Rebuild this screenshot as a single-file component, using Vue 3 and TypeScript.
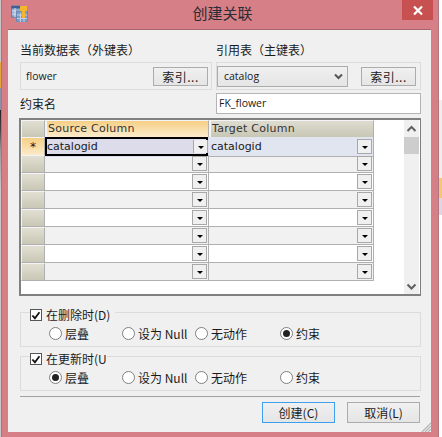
<script setup lang="ts">
const rows = [
  { src: 'catalogid', tgt: 'catalogid' },
  { src: '', tgt: '' },
  { src: '', tgt: '' },
  { src: '', tgt: '' },
  { src: '', tgt: '' },
  { src: '', tgt: '' },
  { src: '', tgt: '' },
  { src: '', tgt: '' },
]
const groups = [
  { label: '在删除时(D)', active: 3, gap: true },
  { label: '在更新时(U', active: 0, gap: false },
]
const options = ['层叠', '设为 Null', '无动作', '约束']
</script>

<template>
  <div class="screen">
    <div class="window">
      <div class="titlebar">
        <svg class="appicon" width="17" height="17" viewBox="0 0 17 17">
          <rect x="0.5" y="1" width="9" height="11" fill="#8fa9cf" stroke="#5f7fae" />
          <rect x="0.5" y="1" width="9" height="2.500" fill="#3f5f96" />
          <path d="M1 6h8M1 9h8M4 3v9" stroke="#d6e0ee" />
          <rect x="5.500" y="6" width="11" height="11" fill="#7f9cc8" stroke="#6c88b4" />
          <path d="M6 10h10M6 13.500h10M9.500 8v9M13 8v9" stroke="#c2d0e6" />
          <path d="M9 1h7v5h-2v7h-3V6H9z" fill="#f3b62c" />
        </svg>
        <div class="title">创建关联</div>
        <div class="close">
          <svg width="12" height="11" viewBox="0 0 12 11">
            <path d="M2 1.500l8 8M10 1.500l-8 8" stroke="#fff" stroke-width="2.200" />
          </svg>
        </div>
      </div>

      <div class="client">
        <div class="top">
          <div class="col">
            <div class="label">当前数据表（外键表）</div>
            <div class="box">
              <span class="value">flower</span>
              <div class="btn small">索引...</div>
            </div>
          </div>
          <div class="col">
            <div class="label">引用表（主键表）</div>
            <div class="box right">
              <div class="select">
                <span>catalog</span>
                <svg width="9" height="7" viewBox="0 0 9 7"><path d="M1 1.500l3.500 3.500 3.500-3.500" fill="none" stroke="#555" stroke-width="2" /></svg>
              </div>
              <div class="btn small">索引...</div>
            </div>
          </div>
        </div>

        <div class="name-row">
          <div class="label">约束名</div>
          <div class="input">FK_flower</div>
        </div>

        <div class="grid">
          <div class="table">
            <div class="tr head">
              <div class="rh"></div>
              <div class="th hot">Source Column</div>
              <div class="th">Target Column</div>
            </div>
            <div v-for="(row, i) in rows" :key="i" class="tr" :class="{ alt: i % 2 === 1, first: i === 0 }">
              <div class="rh" :class="{ hot2: i === 0 }">{{ i === 0 ? '*' : '' }}</div>
              <div class="td" :class="{ current: i === 0 }">
                <span>{{ row.src }}</span>
                <div class="drop"><i></i></div>
              </div>
              <div class="td">
                <span>{{ row.tgt }}</span>
                <div class="drop"><i></i></div>
              </div>
            </div>
          </div>
          <div class="scroll">
            <svg class="up" width="15" height="17" viewBox="0 0 15 17"><path d="M3.500 11l4-4 4 4" fill="none" stroke="#606060" stroke-width="2" /></svg>
            <div class="thumb"></div>
            <div class="track"></div>
            <svg width="15" height="15" viewBox="0 0 15 15"><path d="M3.500 5.500l4 4 4-4" fill="none" stroke="#606060" stroke-width="2" /></svg>
          </div>
        </div>

        <div v-for="(g, gi) in groups" :key="gi" class="group" :class="{ second: gi === 1 }">
          <div class="legend" :class="{ pad: g.gap }">
            <span class="check">
              <svg width="11" height="11" viewBox="0 0 11 11"><path d="M1.500 5.500l2.800 3 5-6.500" fill="none" stroke="#111" stroke-width="2" /></svg>
            </span>
            <span>{{ g.label }}</span>
          </div>
          <div class="radios">
            <div v-for="(o, oi) in options" :key="o" class="radio">
              <span class="dot" :class="{ on: oi === g.active }"></span>
              <span>{{ o }}</span>
            </div>
          </div>
        </div>

        <div class="sep"></div>

        <div class="actions">
          <div class="btn big default">创建(C)</div>
          <div class="btn big">取消(L)</div>
        </div>

        <svg class="grip" width="11" height="11" viewBox="0 0 11 11">
          <path d="M11 2L2 11M11 5L5 11M11 8L8 11" stroke="#b4b4b4" stroke-width="1.200" />
        </svg>
      </div>
    </div>
    <div class="outside"></div>
  </div>
</template>

<style scoped>
.screen {
  width: 442px;
  height: 437px;
  display: flex;
  overflow: hidden;
  background: linear-gradient(180deg, #c8c8c8 0, #c8c8c8 62px, #e2a83a 62px, #e2a83a 88px, #8f8fa8 88px, #8f8fa8 110px, #222 110px, #444 130px, #999 150px, #c9c9c9 190px, #c9c9c9 100%);
  font-family: "Noto Sans CJK SC", "DejaVu Sans", sans-serif;
  font-size: 12px;
  color: #1a1a1a;
}
.window {
  width: 438px;
  margin-left: 1px;
  height: 437px;
  flex: none;
  display: flex;
  flex-direction: column;
  background: #d67f87;
  border-left: 1px solid #a9747a;
  border-right: 1px solid #b0787e;
  box-sizing: border-box;
}
.outside {
  flex: 1;
  background: linear-gradient(180deg, #fff 0, #fff 100px, #eee 100px, #eee 178px, #f0c877 178px, #f0c877 198px, #d8d8e8 198px, #d8d8e8 215px, #fff 215px);
}
.titlebar {
  height: 29px;
  flex: none;
  display: flex;
  align-items: flex-start;
  padding-left: 9px;
}
.appicon {
  margin-top: 5px;
  flex: none;
}
.title {
  flex: 1;
  text-align: center;
  font-size: 15px;
  line-height: 26px;
  color: #2b2b33;
  padding-left: 15px;
}
.close {
  width: 31px;
  height: 20px;
  margin-right: 5px;
  background: #c75050;
  display: flex;
  align-items: center;
  justify-content: center;
  flex: none;
}
.client {
  flex: 1;
  position: relative;
  margin: 0 7px 5px 6px;
  background: #f0f0f0;
  border-top: 1px solid #a9656d;
  padding: 13px 10px 0 12px;
  box-sizing: border-box;
  min-height: 0;
}
.top {
  display: grid;
  grid-template-columns: 192px 205px;
  column-gap: 4px;
}
.label {
  line-height: 14px;
  height: 14px;
  font-size: 12px;
}
.box {
  margin-top: 5px;
  height: 28px;
  box-sizing: border-box;
  border: 1px solid #dcdcdc;
  display: flex;
  align-items: center;
  justify-content: space-between;
  padding: 0 3px 0 5px;
}
.box.right {
  padding-left: 0;
  padding-right: 4px;
}
.value {
  font-family: "Open Sans", sans-serif;
  font-size: 10.500px;
}
.btn {
  box-sizing: border-box;
  border: 1px solid #acacac;
  background: linear-gradient(180deg, #f0f0f0, #e5e5e5);
  display: flex;
  align-items: center;
  justify-content: center;
}
.btn.small {
  width: 55px;
  height: 19px;
  letter-spacing: 0.500px;
}
.select {
  width: 131px;
  height: 21px;
  box-sizing: border-box;
  border: 1px solid #acacac;
  background: linear-gradient(180deg, #f0f0f0, #e5e5e5);
  display: flex;
  align-items: center;
  justify-content: space-between;
  padding: 0 4px 0 6px;
  font-family: "Open Sans", sans-serif;
  font-size: 10.500px;
}
.name-row {
  display: grid;
  grid-template-columns: 192px 205px;
  column-gap: 4px;
  margin-top: 3px;
  align-items: center;
}
.input {
  height: 21px;
  box-sizing: border-box;
  border: 1px solid #b4b4b4;
  background: #fff;
  padding-left: 2px;
  line-height: 19px;
  font-family: "Open Sans", sans-serif;
  font-size: 10.500px;
}
.grid {
  margin-top: 4px;
  margin-left: -1px;
  height: 178px;
  width: 402px;
  box-sizing: border-box;
  background: #fff;
  border: 1px solid #808080;
  border-top-width: 2px;
  border-left-width: 2px;
  border-bottom-width: 2px;
  display: flex;
  justify-content: space-between;
  font-family: "DejaVu Sans", sans-serif;
}
.table {
  width: 353px;
}
.tr {
  display: grid;
  grid-template-columns: 24px 164px 165px;
  height: 18px;
  background: #fff;
}
.tr.head {
  height: 17px;
}
.tr.alt {
  background: #f1f1f1;
}
.rh {
  box-sizing: border-box;
  border: 1px solid #f4f4f4;
  border-right: 1px solid #b0b0b0;
  border-bottom: 1px solid #b0b0b0;
  background: linear-gradient(180deg, #e0dfd2, #c9c8b6);
  text-align: center;
  line-height: 18px;
  font-size: 12px;
}
.rh.hot2 {
  background: linear-gradient(180deg, #f6cf85, #fbeccd);
}
.th {
  box-sizing: border-box;
  font-size: 11px;
  line-height: 16px;
  padding-left: 1px;
  border: 1px solid #f4f4f4;
  border-left-width: 2px;
  border-right: 1px solid #b0b0b0;
  background: linear-gradient(180deg, #dedccf, #c8c7b5);
  color: #333;
  letter-spacing: 0.250px;
}
.th.hot {
  background: linear-gradient(180deg, #f6cf85, #fbeccd);
}
.td {
  position: relative;
  box-sizing: border-box;
  border-right: 1px solid #b0b0b0;
  border-bottom: 1px solid #b0b0b0;
  display: flex;
  align-items: center;
  padding-left: 2px;
  font-size: 11px;
  line-height: 16px;
}
.first .td {
  background: #e1e5f0;
}
.first .td.current {
  background: #dcdcea;
  border-color: transparent;
  box-shadow: inset 0 0 0 2px #000;
}
.td span {
  flex: 1;
}
.drop {
  width: 15px;
  height: 15px;
  box-sizing: border-box;
  border: 1px solid #a8a8a8;
  background: #f0f0f0;
  margin-right: 1px;
  display: flex;
  align-items: center;
  justify-content: center;
  flex: none;
}
.current .drop {
  height: 13px;
  margin-right: 0;
  border-top: 0;
  border-bottom: 0;
}
.drop i {
  width: 0;
  height: 0;
  border-left: 3px solid transparent;
  border-right: 3px solid transparent;
  border-top: 3px solid #000;
  margin-top: 1px;
}
.scroll {
  width: 15px;
  margin-right: 1px;
  display: flex;
  flex-direction: column;
  background: #fff;
}
.scroll svg {
  flex: none;
  background: #f0f0f0;
}
.thumb {
  height: 17px;
  background: #cdcdcd;
  flex: none;
}
.track {
  flex: 1;
  background: #f0f0f0;
}
.group {
  position: relative;
  margin-top: 16px;
  height: 35px;
  width: 401px;
  box-sizing: border-box;
  border: 1px solid #dcdcdc;
}
.group.second {
  margin-top: 9px;
}
.legend {
  position: absolute;
  left: 9px;
  top: -5px;
  height: 14px;
  display: flex;
  align-items: center;
  background: #f0f0f0;
  line-height: 14px;
}
.legend.pad {
  padding-right: 5px;
}
.check {
  width: 12px;
  height: 12px;
  box-sizing: border-box;
  border: 1px solid #555;
  background: #fff;
  margin-right: 4px;
  display: flex;
  align-items: center;
  justify-content: center;
}
.radios {
  display: grid;
  grid-template-columns: 73px 73px 85px auto;
  padding-left: 28px;
  padding-top: 13px;
}
.radio {
  display: flex;
  align-items: center;
  gap: 3px;
  height: 14px;
}
.dot {
  width: 13px;
  height: 13px;
  box-sizing: border-box;
  border: 1px solid #808080;
  border-radius: 50%;
  background: #fff;
  display: flex;
  align-items: center;
  justify-content: center;
  flex: none;
}
.dot.on::after {
  content: "";
  width: 7px;
  height: 7px;
  border-radius: 50%;
  background: #222;
}
.sep {
  margin-top: 5px;
  height: 1px;
  width: 400px;
  background: #a0a0a0;
}
.actions {
  margin-top: 5px;
  display: flex;
  justify-content: flex-end;
  gap: 12px;
  padding-right: 1px;
}
.btn.big {
  width: 73px;
  height: 21px;
}
.btn.default {
  border-color: #3c9ff0;
}
.grip {
  position: absolute;
  right: 0;
  bottom: 0;
}
</style>
